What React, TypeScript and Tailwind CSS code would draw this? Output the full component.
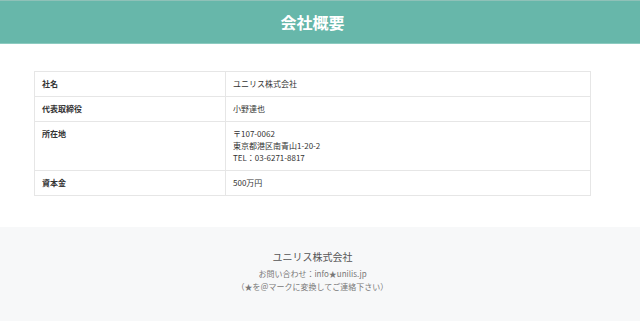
const rows: { label: string; value: string[] }[] = [
  { label: "社名", value: ["ユニリス株式会社"] },
  { label: "代表取締役", value: ["小野達也"] },
  { label: "所在地", value: ["〒107-0062", "東京都港区南青山1-20-2", "TEL：03-6271-8817"] },
  { label: "資本金", value: ["500万円"] },
];

export default function App() {
  return (
    <div className="min-h-[321px] bg-white font-['Noto_Sans_CJK_JP','Noto_Sans',sans-serif] text-[#333]">
      <header className="flex h-[44px] items-center justify-center border-t border-t-[#8fc1b8] border-b border-b-[#8ccbc0] bg-[#67b7aa] pr-[15px]">
        <h1 className="text-[16px] font-semibold leading-none text-white">会社概要</h1>
      </header>

      <main className="pr-[15px] pt-[27px] pb-[31px]">
        <table className="mx-[34px] w-[557px] border-collapse border border-[#e6e6e6] text-[8px] leading-[12px]">
          <tbody>
            {rows.map((row) => (
              <tr key={row.label} className="border-b border-[#e6e6e6]">
                <th className="w-[191px] border-r border-[#e6e6e6] px-[7px] py-[6px] text-left align-top font-semibold">
                  {row.label}
                </th>
                <td className="px-[7px] py-[6px] align-top">
                  {row.value.map((line) => (
                    <div key={line}>{line}</div>
                  ))}
                </td>
              </tr>
            ))}
          </tbody>
        </table>
      </main>

      <footer className="h-[95px] bg-[#f7f8f9] pr-[15px] pt-[23px] text-center">
        <p className="text-[10px] leading-[14px] text-[#555]">ユニリス株式会社</p>
        <p className="mt-[3px] text-[8px] leading-[13px] text-[#777]">
          お問い合わせ：info★unilis.jp
          <br />
          （★を＠マークに変換してご連絡下さい）
        </p>
      </footer>
    </div>
  );
}
